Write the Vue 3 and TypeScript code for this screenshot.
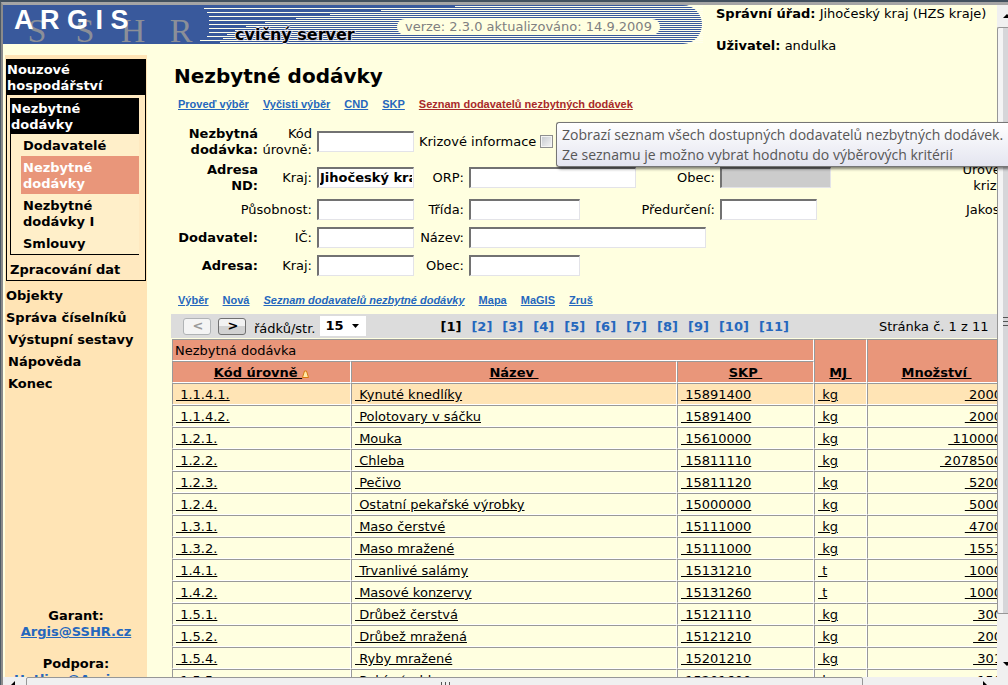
<script setup lang="ts">
import { ref } from 'vue'

interface Row {
  code: string
  name: string
  skp: string
  unit: string
  amount: string
}

const rows: Row[] = [
  { code: '1.1.4.1.', name: 'Kynuté knedlíky', skp: '15891400', unit: 'kg', amount: '2000' },
  { code: '1.1.4.2.', name: 'Polotovary v sáčku', skp: '15891400', unit: 'kg', amount: '2000' },
  { code: '1.2.1.', name: 'Mouka', skp: '15610000', unit: 'kg', amount: '110000' },
  { code: '1.2.2.', name: 'Chleba', skp: '15811110', unit: 'kg', amount: '2078500' },
  { code: '1.2.3.', name: 'Pečivo', skp: '15811120', unit: 'kg', amount: '5200' },
  { code: '1.2.4.', name: 'Ostatní pekařské výrobky', skp: '15000000', unit: 'kg', amount: '5000' },
  { code: '1.3.1.', name: 'Maso čerstvé', skp: '15111000', unit: 'kg', amount: '4700' },
  { code: '1.3.2.', name: 'Maso mražené', skp: '15111000', unit: 'kg', amount: '1551' },
  { code: '1.4.1.', name: 'Trvanlivé salámy', skp: '15131210', unit: 't', amount: '1000' },
  { code: '1.4.2.', name: 'Masové konzervy', skp: '15131260', unit: 't', amount: '1000' },
  { code: '1.5.1.', name: 'Drůbež čerstvá', skp: '15121110', unit: 'kg', amount: '300' },
  { code: '1.5.2.', name: 'Drůbež mražená', skp: '15121210', unit: 'kg', amount: '200' },
  { code: '1.5.4.', name: 'Ryby mražené', skp: '15201210', unit: 'kg', amount: '301' },
  { code: '1.5.5.', name: 'Rybí výrobky', skp: '15201600', unit: 'kg', amount: '150' },
]

const pages = Array.from({ length: 11 }, (_, i) => i + 1)
const region = ref('Jihočeský kraj')

// Stripes of the banner: every second one starts further to the right.
const starts = [455, 204, 381, 207, 330, 209, 296, 209, 265, 209, 246, 209, 235, 209, 227, 207, 223, 200, 220]
const stripes = starts.map((x, i) => ({ x: x - 3, y: i * 2 + 1 }))
</script>

<template>
  <div class="window">
    <div class="frame">
      <div class="page">
        <header class="top">
          <div class="banner">
            <svg class="art" viewBox="0 0 700 39" aria-hidden="true">
              <path d="M0 0H680A19 19.500 0 0 1 680 39H0Z" fill="#39599c" />
              <rect v-for="s in stripes" :key="s.y" :x="s.x" :y="s.y" :width="700 - s.x" height="1" fill="#ffffec" />
            </svg>
            <div class="sshr"><span>S</span><span>S</span><span>H</span><span>R</span></div>
            <div class="argis">A R G I S</div>
            <div class="server">cvičný server</div>
            <div class="version">verze: 2.3.0 aktualizováno: 14.9.2009</div>
          </div>
          <div class="user">
            <p><b>Správní úřad:</b> Jihočeský kraj (HZS kraje)</p>
            <p><b>Uživatel:</b> andulka</p>
          </div>
        </header>

        <div class="body">
          <aside class="side">
            <nav>
              <div class="group">
                <div class="head">Nouzové hospodářství</div>
                <div class="sub">
                  <div class="head">Nezbytné dodávky</div>
                  <a href="#">Dodavatelé</a>
                  <a href="#" class="active">Nezbytné dodávky</a>
                  <a href="#">Nezbytné dodávky&nbsp;I</a>
                  <a href="#">Smlouvy</a>
                </div>
                <a href="#" class="last">Zpracování dat</a>
              </div>
              <a href="#" class="item">Objekty</a>
              <a href="#" class="item">Správa číselníků</a>
              <a href="#" class="item inset">Výstupní sestavy</a>
              <a href="#" class="item inset">Nápověda</a>
              <a href="#" class="item inset">Konec</a>
            </nav>
            <div class="contact">
              <p>Garant:<br /><a href="#">Argis@SSHR.cz</a></p>
              <p>Podpora:<br /><a href="#">Hotline@Argis.cz</a></p>
            </div>
          </aside>

          <main>
            <h1>Nezbytné dodávky</h1>
            <div class="links">
              <a href="#">Proveď výběr</a>
              <a href="#">Vyčisti výběr</a>
              <a href="#">CND</a>
              <a href="#">SKP</a>
              <a href="#" class="hot">Seznam dodavatelů nezbytných dodávek</a>
            </div>

            <form class="form" @submit.prevent>
              <b class="tall">Nezbytná dodávka:</b>
              <label class="tall" for="kod">Kód úrovně:</label>
              <input id="kod" type="text" />
              <div class="check">
                <label for="krizove">Krizové informace</label>
                <input id="krizove" type="checkbox" />
              </div>

              <b class="tall">Adresa<br />ND:</b>
              <label for="kraj">Kraj:</label>
              <input id="kraj" v-model="region" type="text" />
              <label for="orp">ORP:</label>
              <input id="orp" type="text" class="w167" />
              <label for="obec">Obec:</label>
              <input id="obec" type="text" class="w111" disabled />
              <span class="tall">Úroveň<br />krize:</span>

              <label class="span2" for="pusobnost">Působnost:</label>
              <input id="pusobnost" type="text" />
              <label for="trida">Třída:</label>
              <input id="trida" type="text" class="w111" />
              <label for="predurceni">Předurčení:</label>
              <input id="predurceni" type="text" />
              <span>Jakost:</span>

              <b>Dodavatel:</b>
              <label for="ic">IČ:</label>
              <input id="ic" type="text" />
              <label for="nazev">Název:</label>
              <input id="nazev" type="text" class="w237" />

              <b class="first">Adresa:</b>
              <label for="kraj2">Kraj:</label>
              <input id="kraj2" type="text" />
              <label for="obec2">Obec:</label>
              <input id="obec2" type="text" class="w111" />
            </form>

            <div class="links second">
              <a href="#">Výběr</a>
              <a href="#">Nová</a>
              <a href="#"><i>Seznam dodavatelů nezbytné dodávky</i></a>
              <a href="#">Mapa</a>
              <a href="#">MaGIS</a>
              <a href="#">Zruš</a>
            </div>

            <div class="pager">
              <button type="button" disabled>&lt;</button>
              <button type="button">&gt;</button>
              <label for="perpage">řádků/str.</label>
              <span class="drop">
                <select id="perpage"><option>15</option><option>30</option></select>
                <svg viewBox="0 0 7 4" width="7" height="4" aria-hidden="true"><path d="M0 0H7L3.500 4Z" /></svg>
              </span>
              <div class="pages">
                <template v-for="p in pages" :key="p">
                  <b v-if="p === 1">[1]</b>
                  <a v-else href="#">[{{ p }}]</a>
                </template>
              </div>
              <span class="count">Stránka č. 1 z 11</span>
            </div>

            <table>
              <colgroup>
                <col class="c-code" /><col class="c-name" /><col class="c-skp" /><col class="c-unit" /><col class="c-amount" />
              </colgroup>
              <thead>
                <tr>
                  <th colspan="3" class="grouphead">Nezbytná dodávka</th>
                  <th rowspan="2"><a href="#">MJ&nbsp;</a></th>
                  <th rowspan="2"><a href="#">Množství&nbsp;</a></th>
                </tr>
                <tr>
                  <th>
                    <a href="#">Kód úrovně&nbsp;</a><svg class="sort" viewBox="0 0 7 8" width="7" height="8" aria-hidden="true"><path d="M.5 7.500H6.500L4.500 1H2.500Z" fill="#ffe9a8" stroke="#d9780f" /></svg>
                  </th>
                  <th><a href="#">Název&nbsp;</a></th>
                  <th><a href="#">SKP&nbsp;</a></th>
                </tr>
              </thead>
              <tbody>
                <tr v-for="(r, i) in rows" :key="r.code" :class="{ picked: i === 0 }">
                  <td><a href="#">&nbsp;{{ r.code }}</a></td>
                  <td><a href="#">&nbsp;{{ r.name }}</a></td>
                  <td><a href="#">&nbsp;{{ r.skp }}</a></td>
                  <td><a href="#">&nbsp;{{ r.unit }}</a></td>
                  <td class="num"><a href="#">&nbsp;{{ r.amount }}</a></td>
                </tr>
              </tbody>
            </table>
          </main>
        </div>
      </div>

      <div class="vbar" aria-hidden="true">
        <div class="up"><svg viewBox="0 0 8 4" width="8" height="4"><path d="M0 4L4 0L8 4Z" /></svg></div>
        <div class="vthumb"><i></i><i></i><i></i></div>
        <div class="down"><svg viewBox="0 0 8 4" width="8" height="4"><path d="M0 0L4 4L8 0Z" /></svg></div>
      </div>
      <div class="hbar" aria-hidden="true">
        <div class="left"><svg viewBox="0 0 4 8" width="4" height="8"><path d="M4 0L0 4L4 8Z" /></svg></div>
        <div class="hthumb"><i></i><i></i><i></i></div>
        <div class="right"><svg viewBox="0 0 4 8" width="4" height="8"><path d="M0 0L4 4L0 8Z" /></svg></div>
      </div>
    </div>
    <div class="tooltip" role="tooltip">
      Zobrazí seznam všech dostupných dodavatelů nezbytných dodávek.<br />
      Ze seznamu je možno vybrat hodnotu do výběrových kritérií
    </div>
  </div>
</template>

<style>
body {
  margin: 0;
}
</style>

<style scoped>
.window {
  position: relative;
  box-sizing: border-box;
  height: 100vh;
  overflow: hidden;
  border-top: 2px solid #42505e;
  border-left: 1px solid #4d5a66;
  font: 13px/16px Verdana, "DejaVu Sans", sans-serif;
  color: #000;
}
.frame {
  box-sizing: border-box;
  height: 100%;
  display: grid;
  grid-template: minmax(0, 1fr) 8px / minmax(0, 1fr) 11px;
  border-top: 3px solid #a5a5a5;
  border-left: 2px solid #8b8b8b;
  background: #ffffe0;
}
.page {
  overflow: hidden;
  display: flex;
  flex-direction: column;
}
p {
  margin: 0;
}
.top {
  display: flex;
  flex: none;
  height: 50px;
  gap: 13px;
  white-space: nowrap;
}
.banner {
  position: relative;
  flex: none;
  width: 700px;
  height: 39px;
}
.art {
  display: block;
  width: 100%;
  height: 100%;
}
.sshr,
.argis,
.server,
.version {
  position: absolute;
}
.sshr {
  left: 10px;
  top: 6px;
  display: grid;
  grid-template-columns: repeat(4, 48px);
  text-align: center;
  font: 34px/40px "Liberation Serif", serif;
  color: #8b8f98;
}
.argis {
  left: 11px;
  top: 0;
  font: bold 27px/31px "Liberation Sans", sans-serif;
  color: #fff;
}
.server {
  left: 232px;
  top: 21px;
  font: 900 16px/18px "DejaVu Sans", sans-serif;
  text-shadow: 1px 0 #dde, -1px 0 #dde, 0 1px #dde, 0 -1px #dde;
}
.version {
  left: 394px;
  top: 14px;
  padding: 0 8px;
  border-radius: 8px;
  background: #ffffe0;
  color: #808080;
}
.user {
  display: grid;
  gap: 16px;
  align-content: start;
  padding-top: 1px;
}
.body {
  display: flex;
  flex: 1;
  min-height: 0;
  padding-left: 2px;
}
.side {
  flex: none;
  box-sizing: border-box;
  width: 142px;
  padding: 4px 1px 0;
  background: #ffe4b5;
  font-weight: bold;
}
.side nav a {
  display: block;
  color: #000;
  text-decoration: none;
}
.group {
  border: 1px solid #000;
  border-top: 0;
  background: #ffe9c0;
}
.head {
  padding: 3px 20px 1px 0;
  background: #000;
  color: #fff;
}
.sub {
  margin: 3px 6px 6px 3px;
  border: solid #000;
  border-width: 0 0 1px 1px;
  background: #ffefc9;
}
.sub a {
  margin-left: 10px;
  padding: 4px 2px 2px;
}
.side nav .active {
  background: #e9967a;
  color: #fff;
}
.group .last {
  padding: 1px 3px 2px;
}
.item {
  padding-top: 6px;
}
.group + .item {
  padding-top: 7px;
}
.inset {
  padding-left: 2px;
}
.contact {
  display: grid;
  gap: 16px;
  margin-top: 216px;
  text-align: center;
}
.contact a {
  color: #2567bd;
}
main {
  flex: none;
  width: 838px;
  padding: 9px 0 0 24px;
}
h1 {
  margin: 0 0 0 3px;
  font-size: 20px;
  line-height: 24px;
}
.links {
  display: flex;
  gap: 14px;
  margin: 10px 0 0 7px;
  font: bold 11px/12px "Liberation Sans", sans-serif;
}
.links a {
  color: #2567bd;
}
.links .hot {
  color: #a82a2a;
}
.second {
  margin-top: 15px;
}
.form {
  display: grid;
  grid-template-columns: 87px 49px 97px 45px 167px 74px 111px 173px;
  grid-template-rows: 36px 36px 28px 28px 28px;
  column-gap: 5px;
  align-items: center;
  margin-top: 13px;
  white-space: nowrap;
}
.form > b,
.form > label,
.form > span {
  padding-top: 2px;
  text-align: right;
}
.form > b,
.form > .first {
  grid-column: 1;
}
.form > .tall {
  white-space: normal;
}
.form > .span2 {
  grid-column: 1 / span 2;
}
.form > label {
  justify-self: end;
}
.form input[type='text'] {
  box-sizing: border-box;
  width: 97px;
  height: 21px;
  padding: 0 1px;
  border: 1px solid #868686;
  border-width: 2px 1px 1px 2px;
  border-color: #727272 #e3e3e8 #e3e3e8 #727272;
  background: #fff;
  font: bold 13px/16px Verdana, "DejaVu Sans", sans-serif;
  color: #000;
}
.form input[type='text'].w111 {
  width: 111px;
}
.form input[type='text'].w167 {
  width: 167px;
}
.form input[type='text'].w237 {
  width: 237px;
}
.form input:disabled {
  background: #ccc;
}
.check {
  grid-column: 4 / -1;
  display: flex;
  align-items: center;
  gap: 4px;
}
.check label {
  padding-top: 2px;
}
.check input {
  appearance: none;
  box-sizing: border-box;
  width: 13px;
  height: 13px;
  margin: 0;
  border: 1px solid #8e8f8f;
  background: linear-gradient(135deg, #c4c8ce, #f6f6f6);
  box-shadow: inset 0 0 0 1px #f4f4f4;
}
.pager {
  display: flex;
  align-items: center;
  height: 24px;
  margin-top: 8px;
  padding-left: 12px;
  background: #dcdcdc;
  white-space: nowrap;
}
.pager button {
  box-sizing: border-box;
  width: 28px;
  height: 17px;
  margin-right: 7px;
  padding: 0 0 0 2px;
  border: 1px solid #707070;
  border-radius: 3px;
  background: linear-gradient(#f2f2f2 50%, #d2d2d2 50%);
  font: bold 13px/14px Verdana, "DejaVu Sans", sans-serif;
  color: #000;
}
.pager button:disabled {
  border-color: #b0b3b5;
  background: #f4f4f4;
  color: #9a9a9a;
}
.pager label {
  margin-left: 1px;
  padding-top: 5px;
}
.drop {
  display: flex;
  align-items: center;
  width: 46px;
  margin-left: 5px;
  background: #fff;
}
.drop select {
  appearance: none;
  width: 32px;
  height: 20px;
  padding: 0 0 0 5px;
  border: 0;
  background: transparent;
  font: bold 13px/16px Verdana, "DejaVu Sans", sans-serif;
  color: #000;
}
.pages {
  display: flex;
  gap: 10px;
  margin-left: 74px;
  padding-top: 2px;
  font-weight: bold;
}
.pages a {
  color: #2567bd;
  text-decoration: none;
}
.count {
  margin-left: 90px;
  padding-top: 2px;
}
table {
  width: 834px;
  margin: 1px 0 0 1px;
  border-collapse: separate;
  border-spacing: 0;
  table-layout: fixed;
}
.c-code { width: 179px; }
.c-name { width: 326px; }
.c-skp { width: 137px; }
.c-unit { width: 53px; }
.c-amount { width: 139px; }
th,
td {
  box-sizing: border-box;
  height: 22px;
  padding: 2px 3px 0;
  border: 1px solid;
  border-color: #999 #fff #fff #999;
  line-height: 18px;
  white-space: nowrap;
}
th {
  background: #e9967a;
  vertical-align: bottom;
}
.grouphead {
  padding-left: 2px;
  font-weight: normal;
  text-align: left;
}
th a,
td a {
  color: #000;
}
.sort {
  vertical-align: -1px;
}
.picked td {
  background: #ffe4b5;
}
.num {
  text-align: right;
}
.vbar {
  display: flex;
  flex-direction: column;
  overflow: hidden;
  background: #f0f0f0;
}
.up {
  height: 22px;
  padding-left: 6px;
  line-height: 18px;
}
.vthumb {
  flex: 1;
  display: flex;
  flex-direction: column;
  justify-content: center;
  gap: 2px;
  padding-left: 5px;
  border: 1px solid #979797;
  border-right: 0;
  border-radius: 2px 0 0 2px;
  background: linear-gradient(90deg, #f4f4f4 50%, #d6d6d9 50%);
}
.vthumb i {
  height: 1px;
  border-bottom: 1px solid #555;
}
.down {
  height: 63px;
  box-sizing: border-box;
  padding: 40px 0 0 6px;
}
.hbar {
  grid-column: 1 / -1;
  display: flex;
  overflow: hidden;
  background: #f0f0f0;
}
.left {
  width: 23px;
  padding-left: 8px;
  box-sizing: border-box;
}
.hthumb {
  flex: 1;
  display: flex;
  justify-content: center;
  gap: 2px;
  box-sizing: border-box;
  height: 12px;
  padding-top: 4px;
  border: 1px solid #979797;
  border-radius: 2px;
  background: #f0f0f0;
}
.hthumb i {
  width: 1px;
  border-right: 1px solid #555;
}
.right {
  width: 145px;
  box-sizing: border-box;
  padding-left: 120px;
}
.tooltip {
  position: absolute;
  left: 555px;
  top: 120px;
  right: 0;
  padding: 2px 0 1px 5px;
  border: 1px solid #767676;
  border-right: 0;
  border-radius: 3px 0 0 3px;
  background: linear-gradient(#fff, #e4e5f0);
  box-shadow: 2px 2px 3px rgba(0, 0, 0, 0.5);
  font: 14px/20px "Open Sans", sans-serif;
  color: #575757;
  white-space: nowrap;
}
</style>
